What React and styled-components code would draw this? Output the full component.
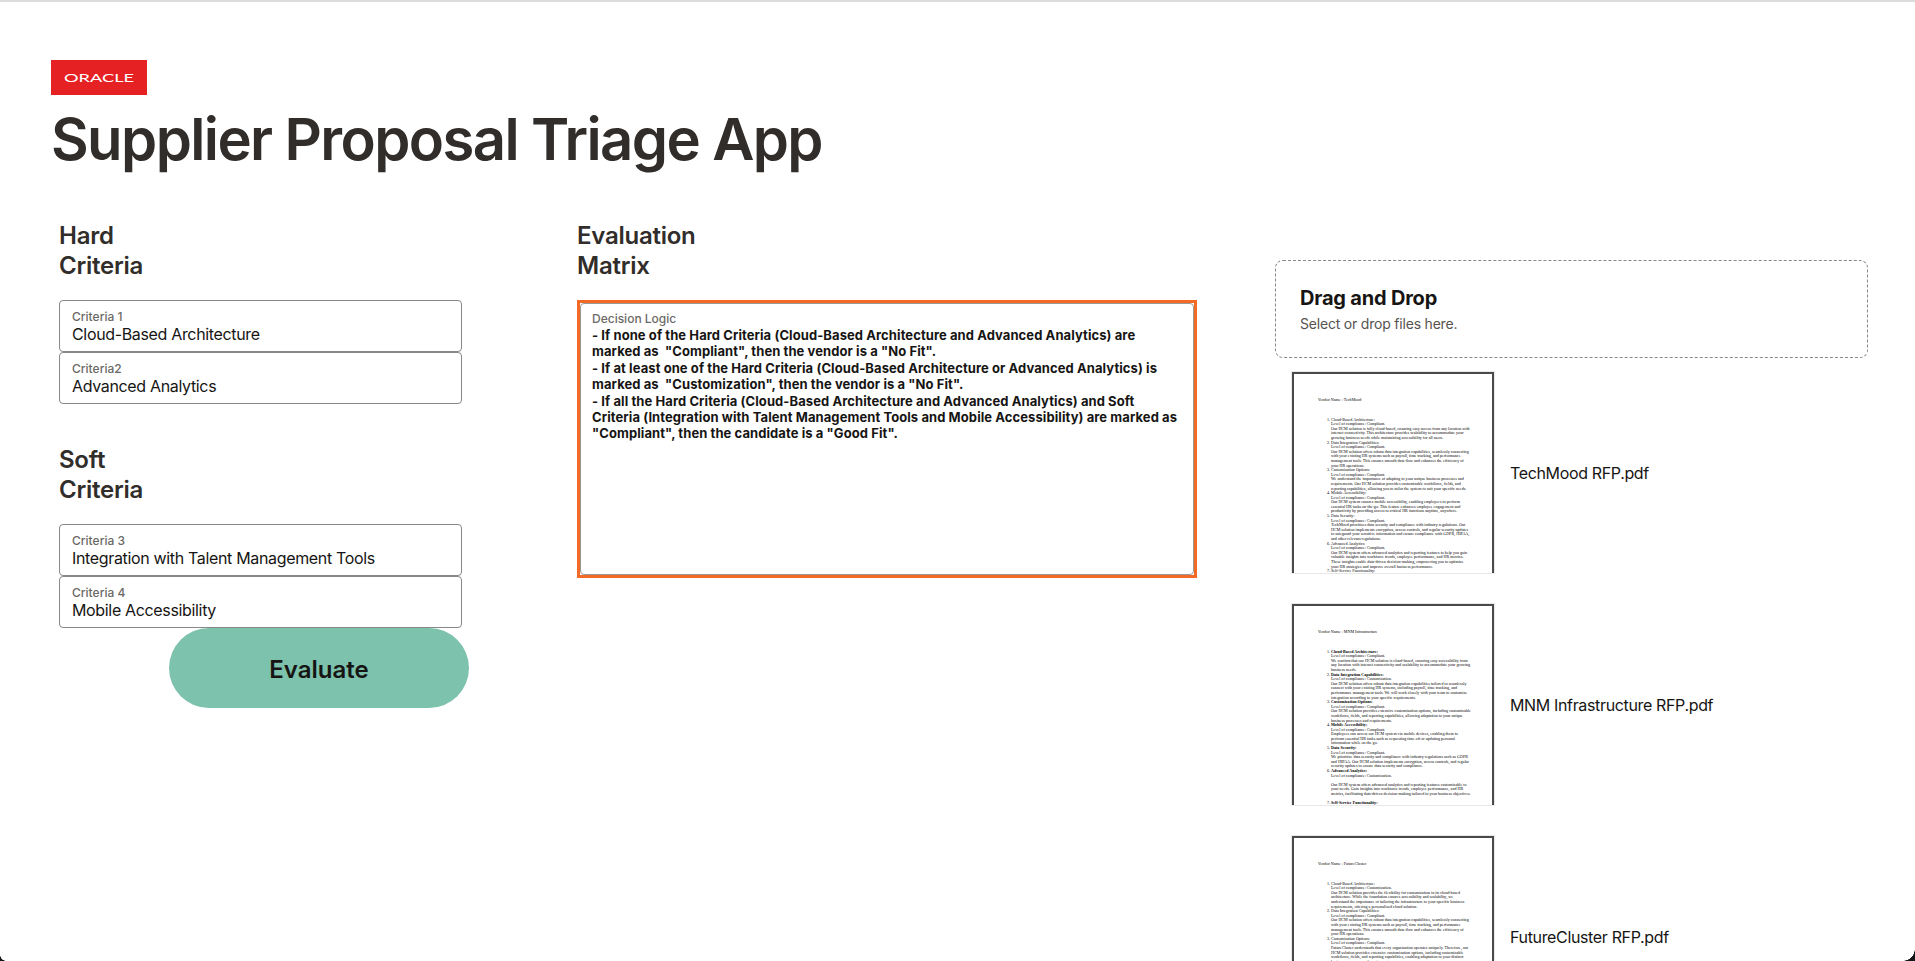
import React from 'react'
import styled, {createGlobalStyle} from 'styled-components'

const GlobalStyle = createGlobalStyle`
  html, body {
    margin: 0;
    height: 100%;
    background: #fff;
    overflow: hidden;
  }
  body {
    font-family: Inter, "Liberation Sans", sans-serif;
    color: #312d2a;
  }
`

const Page = styled.div`
  position: relative;
  height: 961px;
  box-sizing: border-box;
  border-top: 2px solid #dcdcdc;
  padding: 58px 0 0 51px;
  overflow: hidden;
`

const WindowCorner = styled.div`
  position: absolute;
  bottom: 0;
  ${({side}) => side}: 0;
  width: ${({size}) => size}px;
  height: ${({size}) => size}px;
  background: radial-gradient(
    circle at ${({side}) => (side === 'left' ? 'top right' : 'top left')},
    transparent ${({size}) => size - 0.5}px,
    #14181c ${({size}) => size}px
  );
`

const Logo = styled.svg`
  display: block;
  width: 96px;
  height: 35px;
`

const Title = styled.h1`
  margin: 0;
  height: 88px;
  font-size: 58px;
  line-height: 88px;
  font-weight: 600;
  letter-spacing: -1.6px;
  color: #312d2a;
`

const Columns = styled.div`
  display: grid;
  grid-template-columns: 526px 712px 592px;
  margin-top: 38px;
`

const Column = styled.section`
  padding-left: ${({inset}) => inset || 0}px;
  padding-top: ${({top}) => top || 0}px;
`

const Heading = styled.h2`
  margin: 0 0 19px;
  font-size: 24px;
  line-height: 30px;
  font-weight: 600;
  letter-spacing: -0.25px;
  color: #312d2a;
`

const Group = styled.div`
  margin-bottom: ${({gap}) => gap || 0}px;
`

const Field = styled.div`
  box-sizing: border-box;
  width: 403px;
  height: 52px;
  padding: 8px 12px 0;
  border: 1px solid #8a8886;
  border-radius: 4px;
  background: #fff;
`

const FieldLabel = styled.div`
  font-size: 12px;
  line-height: 16px;
  font-weight: 500;
  color: #6b6966;
`

const FieldValue = styled.div`
  font-size: 16px;
  line-height: 19px;
  letter-spacing: -0.34px;
  color: #161513;
`

const Evaluate = styled.button`
  display: block;
  width: 300px;
  height: 80px;
  margin-left: 110px;
  padding: 2px 0 0;
  border: 0;
  border-radius: 40px;
  background: #7dc2ad;
  font-family: inherit;
  font-size: 24px;
  font-weight: 600;
  color: #161513;
`

const LogicFrame = styled.div`
  box-sizing: border-box;
  width: 620px;
  height: 278px;
  border: 3px solid #f36a26;
`

const LogicBox = styled.div`
  box-sizing: border-box;
  height: 100%;
  padding: 7px 8px 0 11px;
  border: 1px solid #9a9896;
  border-radius: 4px;
  font-size: 13px;
  line-height: 16.4px;
`

const LogicLabel = styled.div`
  font-weight: 500;
  font-size: 12px;
  line-height: 16px;
  color: #6b6966;
`

const LogicText = styled.div`
  font-weight: 700;
  letter-spacing: 0.08px;
  color: #161513;
  white-space: pre-wrap;
`

const DropZone = styled.div`
  box-sizing: border-box;
  width: 593px;
  height: 98px;
  margin-left: -14px;
  padding: 24px 24px 0;
  border: 1px dashed #8a8886;
  border-radius: 8px;
`

const DropTitle = styled.div`
  font-size: 20px;
  line-height: 26px;
  font-weight: 700;
  letter-spacing: -0.2px;
  color: #161513;
`

const DropHint = styled.div`
  margin-top: 4px;
  font-size: 14px;
  line-height: 18px;
  letter-spacing: -0.2px;
  color: #57534f;
`

const FileRow = styled.div`
  display: flex;
  align-items: center;
  gap: 15px;
  height: 203px;
  padding-left: 2px;
  margin-bottom: 29px;
  margin-top: ${({first}) => (first ? 13 : 0)}px;
`

const Thumb = styled.div`
  flex: none;
  box-sizing: border-box;
  width: 204px;
  height: 203px;
  padding: 24px 0 0 24px;
  border: 3px solid #4a4a4a;
  border-bottom: 0;
  outline: 1px solid #e8e8e8;
  outline-offset: -1px;
  background: #fff;
  overflow: hidden;
  font-family: "Liberation Serif", serif;
  font-size: 4.1px;
  line-height: 4.6px;
  color: #000;
`

const ThumbName = styled.div`
  margin-bottom: 15px;
`

const ThumbList = styled.ol`
  margin: 0;
  padding: 0 0 0 13px;
  width: 140px;
`

const ThumbTitle = styled.div`
  font-weight: ${({strong}) => (strong ? 700 : 400)};
`

const FileName = styled.div`
  font-size: 16px;
  letter-spacing: -0.35px;
  color: #161513;
`

const hardCriteria = [
  {label: 'Criteria 1', value: 'Cloud-Based Architecture'},
  {label: 'Criteria2', value: 'Advanced Analytics'},
]

const softCriteria = [
  {label: 'Criteria 3', value: 'Integration with Talent Management Tools'},
  {label: 'Criteria 4', value: 'Mobile Accessibility'},
]

const logic = `- If none of the Hard Criteria (Cloud-Based Architecture and Advanced Analytics) are marked as  "Compliant", then the vendor is a "No Fit".
- If at least one of the Hard Criteria (Cloud-Based Architecture or Advanced Analytics) is marked as  "Customization", then the vendor is a "No Fit".
- If all the Hard Criteria (Cloud-Based Architecture and Advanced Analytics) and Soft Criteria (Integration with Talent Management Tools and Mobile Accessibility) are marked as "Compliant", then the candidate is a "Good Fit".`

const files = [
  {
    file: 'TechMood RFP.pdf',
    vendor: 'Vendor Name : TechMood',
    items: [
      ['Cloud-Based Architecture:', 'Level of compliance: Compliant.', 'Our HCM solution is fully cloud-based, ensuring easy access from any location with internet connectivity. This architecture provides scalability to accommodate your growing business needs while maintaining accessibility for all users.'],
      ['Data Integration Capabilities:', 'Level of compliance: Compliant.', 'Our HCM solution offers robust data integration capabilities, seamlessly connecting with your existing HR systems such as payroll, time tracking, and performance management tools. This ensures smooth data flow and enhances the efficiency of your HR operations.'],
      ['Customization Options:', 'Level of compliance: Compliant.', 'We understand the importance of adapting to your unique business processes and requirements. Our HCM solution provides customizable workflows, fields, and reporting capabilities, allowing you to tailor the system to suit your specific needs.'],
      ['Mobile Accessibility:', 'Level of compliance: Compliant.', 'Our HCM system ensures mobile accessibility, enabling employees to perform essential HR tasks on-the-go. This feature enhances employee engagement and productivity by providing access to critical HR functions anytime, anywhere.'],
      ['Data Security:', 'Level of compliance: Compliant.', 'TechMood prioritizes data security and compliance with industry regulations. Our HCM solution implements encryption, access controls, and regular security updates to safeguard your sensitive information and ensure compliance with GDPR, HIPAA, and other relevant regulations.'],
      ['Advanced Analytics:', 'Level of compliance: Compliant.', 'Our HCM system offers advanced analytics and reporting features to help you gain valuable insights into workforce trends, employee performance, and HR metrics. These insights enable data-driven decision-making, empowering you to optimize your HR strategies and improve overall business performance.'],
      ['Self-Service Functionality:'],
    ],
  },
  {
    file: 'MNM Infrastructure RFP.pdf',
    vendor: 'Vendor Name : MNM Infrastructure',
    strong: true,
    items: [
      ['Cloud-Based Architecture:', 'Level of compliance: Compliant.', 'We confirm that our HCM solution is cloud-based, ensuring easy accessibility from any location with internet connectivity and scalability to accommodate your growing business needs.'],
      ['Data Integration Capabilities:', 'Level of compliance: Customization.', 'Our HCM solution offers robust data integration capabilities tailored to seamlessly connect with your existing HR systems, including payroll, time tracking, and performance management tools. We will work closely with your team to customize integration according to your specific requirements.'],
      ['Customization Options:', 'Level of compliance: Compliant.', 'Our HCM solution provides extensive customization options, including customizable workflows, fields, and reporting capabilities, allowing adaptation to your unique business processes and requirements.'],
      ['Mobile Accessibility:', 'Level of compliance: Compliant.', 'Employees can access our HCM system via mobile devices, enabling them to perform essential HR tasks such as requesting time off or updating personal information while on the go.'],
      ['Data Security:', 'Level of compliance: Compliant.', 'We prioritize data security and compliance with industry regulations such as GDPR and HIPAA. Our HCM solution implements encryption, access controls, and regular security updates to ensure data security and compliance.'],
      ['Advanced Analytics:', 'Level of compliance: Customization.', '\u00a0', 'Our HCM system offers advanced analytics and reporting features customizable to your needs. Gain insights into workforce trends, employee performance, and HR metrics, facilitating data-driven decision-making tailored to your business objectives.', '\u00a0'],
      ['Self-Service Functionality:'],
    ],
  },
  {
    file: 'FutureCluster RFP.pdf',
    vendor: 'Vendor Name : FutureCluster',
    items: [
      ['Cloud-Based Architecture:', 'Level of compliance: Customization.', 'Our HCM solution provides the flexibility for customization in its cloud-based architecture. While the foundation ensures accessibility and scalability, we understand the importance of tailoring the infrastructure to your specific business requirements, offering a personalized cloud solution.'],
      ['Data Integration Capabilities:', 'Level of compliance: Compliant.', 'Our HCM solution offers robust data integration capabilities, seamlessly connecting with your existing HR systems such as payroll, time tracking, and performance management tools. This ensures smooth data flow and enhances the efficiency of your HR operations.'],
      ['Customization Options:', 'Level of compliance: Compliant.', 'FutureCluster understands that every organization operates uniquely. Therefore, our HCM solution provides extensive customization options, including customizable workflows, fields, and reporting capabilities, enabling adaptation to your distinct business processes and requirements.'],
    ],
  },
]

const CriteriaGroup = ({items, gap}) => (
  <Group gap={gap}>
    {items.map(item => (
      <Field key={item.label}>
        <FieldLabel>{item.label}</FieldLabel>
        <FieldValue>{item.value}</FieldValue>
      </Field>
    ))}
  </Group>
)

const FileThumb = ({vendor, items, strong}) => (
  <Thumb>
    <ThumbName>{vendor}</ThumbName>
    <ThumbList>
      {items.map(lines => (
        <li key={lines[0]}>
          <ThumbTitle strong={strong}>{lines[0]}</ThumbTitle>
          {lines.slice(1).map((line, i) => <div key={i}>{line}</div>)}
        </li>
      ))}
    </ThumbList>
  </Thumb>
)

const App = () => (
  <Page>
    <GlobalStyle />
    <Logo viewBox="0 0 96 35" role="img" aria-label="Oracle">
      <rect width="96" height="35" fill="#e52124" />
      <text x="13" y="21.5" fill="#fff" fontFamily="Lato, sans-serif" fontSize="12" textLength="70" lengthAdjust="spacingAndGlyphs">ORACLE</text>
    </Logo>
    <Title>Supplier Proposal Triage App</Title>
    <Columns>
      <Column inset={8}>
        <Heading>Hard<br />Criteria</Heading>
        <CriteriaGroup items={hardCriteria} gap={41} />
        <Heading>Soft<br />Criteria</Heading>
        <CriteriaGroup items={softCriteria} />
        <Evaluate>Evaluate</Evaluate>
      </Column>
      <Column inset={0}>
        <Heading>Evaluation<br />Matrix</Heading>
        <LogicFrame>
          <LogicBox>
            <LogicLabel>Decision Logic</LogicLabel>
            <LogicText>{logic}</LogicText>
          </LogicBox>
        </LogicFrame>
      </Column>
      <Column inset={0} top={39}>
        <DropZone>
          <DropTitle>Drag and Drop</DropTitle>
          <DropHint>Select or drop files here.</DropHint>
        </DropZone>
        {files.map((f, i) => (
          <FileRow key={f.file} first={i === 0}>
            <FileThumb vendor={f.vendor} items={f.items} strong={f.strong} />
            <FileName>{f.file}</FileName>
          </FileRow>
        ))}
      </Column>
    </Columns>
    <WindowCorner side="left" size={6} />
    <WindowCorner side="right" size={12} />
  </Page>
)

export default App
